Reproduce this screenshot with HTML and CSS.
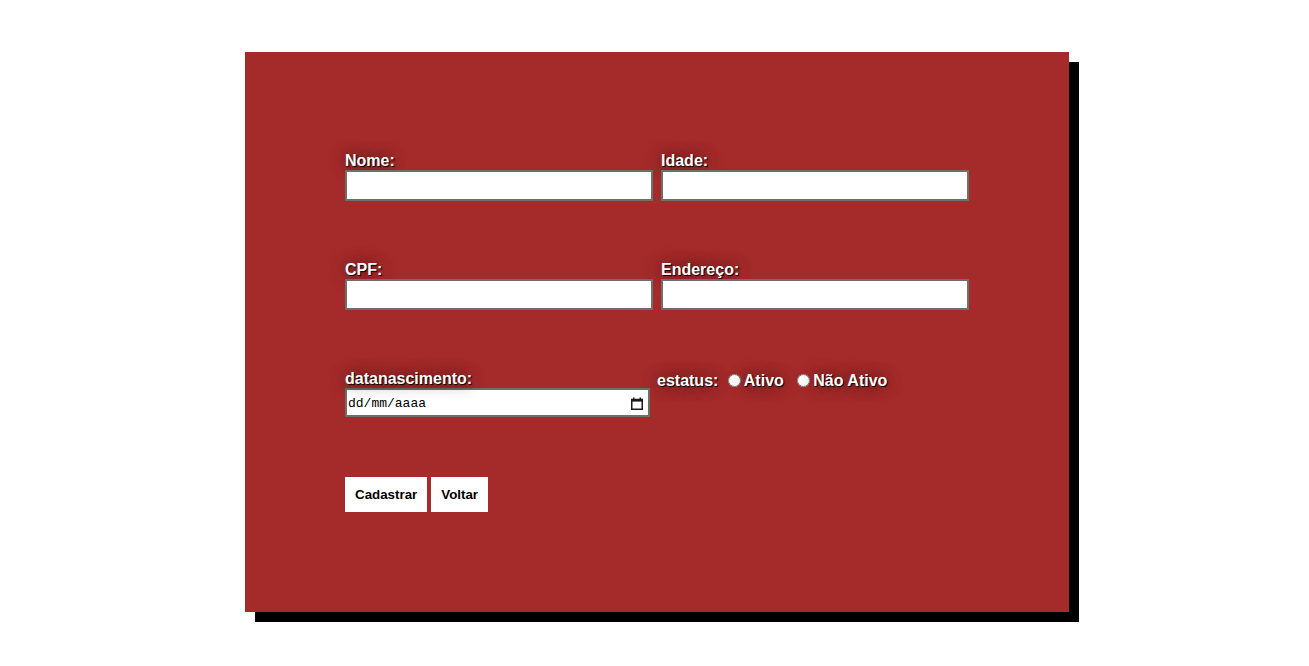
FILE: index.html
```html
<!DOCTYPE html>
<html lang="pt-BR">
<head>
<meta charset="utf-8">
<title>Cadastro</title>
<link rel="stylesheet" href="styles.css">
</head>
<body>
<div class="card">
  <form class="form">
    <div class="grid">
      <div class="field">
        <label class="lbl" for="nome">Nome:</label>
        <input class="txt" id="nome" type="text">
      </div>
      <div class="field">
        <label class="lbl" for="idade">Idade:</label>
        <input class="txt" id="idade" type="text">
      </div>
      <div class="field">
        <label class="lbl" for="cpf">CPF:</label>
        <input class="txt" id="cpf" type="text">
      </div>
      <div class="field">
        <label class="lbl" for="end">Endereço:</label>
        <input class="txt" id="end" type="text">
      </div>
      <div class="field">
        <label class="lbl lbl-top" for="nasc">datanascimento:</label>
        <div class="date">
          <input class="date-in" id="nasc" type="text" placeholder="dd/mm/aaaa">
          <svg class="cal" width="12" height="13" viewBox="0 0 12 13" aria-hidden="true">
            <rect x="0.75" y="2.5" width="10.5" height="9.75" fill="none" stroke="#1a1a1a" stroke-width="1.5"/>
            <rect x="0" y="2" width="12" height="2.6" fill="#1a1a1a"/>
            <rect x="2" y="0.5" width="1.5" height="2.5" fill="#1a1a1a"/>
            <rect x="8.5" y="0.5" width="1.5" height="2.5" fill="#1a1a1a"/>
          </svg>
        </div>
      </div>
      <div class="status lbl">
        <span class="st-label">estatus:</span>
        <input class="radio" type="radio" name="st" id="ativo"><label for="ativo" class="opt">Ativo</label>
        <input class="radio" type="radio" name="st" id="nativo"><label for="nativo" class="opt">Não Ativo</label>
      </div>
    </div>
    <div class="actions">
      <button class="btn" type="button">Cadastrar</button>
      <button class="btn" type="button">Voltar</button>
    </div>
  </form>
</div>
</body>
</html>
```

FILE: styles.css
```css
html, body {
  margin: 0;
  padding: 0;
  background: #ffffff;
}

body {
  font-family: "Liberation Sans", Arial, sans-serif;
  padding-top: 52px;
  padding-bottom: 54px;
}

.card {
  box-sizing: border-box;
  width: 824px;
  height: 560px;
  margin-left: 245px;
  background: #a52a2a;
  box-shadow: 10px 10px 0 #000;
  padding: 100px 100px 0 100px;
}

.grid {
  display: grid;
  grid-template-columns: 308px 308px;
  grid-auto-rows: 49px;
  column-gap: 8px;
  row-gap: 60px;
}

.field {
  display: flex;
  flex-direction: column;
  gap: 0;
}

.lbl {
  color: #ffffff;
  font-weight: bold;
  font-size: 16px;
  line-height: 18px;
  text-shadow: 1px 1px 1px #000, 0 0 15px rgba(0, 0, 0, 0.7);
}

.lbl-top {
  position: relative;
  z-index: 1;
}

.txt {
  box-sizing: border-box;
  width: 308px;
  height: 31px;
  margin: 0;
  border: 2px solid #6e6e6e;
  background: #fff;
  padding: 1px 2px;
  font: 13px "Liberation Sans", Arial, sans-serif;
}

.date {
  box-sizing: border-box;
  width: 305px;
  height: 29px;
  border: 2px solid #6e6e6e;
  background: #fff;
  display: flex;
  align-items: center;
  padding: 1px 5px 0 1px;
}

.date-in {
  flex: 1;
  min-width: 0;
  border: none;
  outline: none;
  padding: 0;
  margin: 0;
  background: transparent;
  font: 13px "Liberation Mono", "DejaVu Sans Mono", monospace;
  color: #000;
}

.date-in::placeholder {
  color: #000;
  opacity: 1;
}

.cal {
  display: block;
  flex: none;
}

.status {
  margin-left: -4px;
  padding-top: 1px;
  white-space: nowrap;
}

.radio {
  margin: 3px 3px 0 5px;
  width: 13px;
  height: 13px;
  vertical-align: -1px;
}

.opt {
  margin-right: 4px;
}

.actions {
  display: flex;
  gap: 4px;
  margin-top: 58px;
}

.btn {
  background: #fff;
  border: none;
  padding: 10px;
  height: 35px;
  font: bold 13.333px "Liberation Sans", Arial, sans-serif;
  color: #000;
  cursor: pointer;
}
```
